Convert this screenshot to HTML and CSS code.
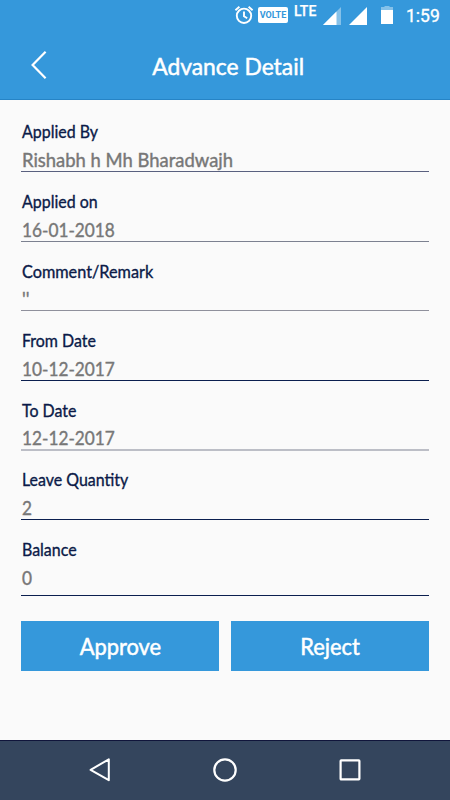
FILE: index.html
```html
<!DOCTYPE html>
<html lang="en">
<head>
<meta charset="utf-8">
<title>Advance Detail</title>
<link rel="stylesheet" href="styles.css">
</head>
<body>
<div class="screen">
  <header class="header">
    <div class="status">
      <svg class="alarm" width="20" height="20" viewBox="0 0 20 20" fill="none" stroke="#fff" stroke-width="1.9"><circle cx="10" cy="10.8" r="7.2"/><path d="M10 6.5v4.8l3.2 2M1.4 5.3l4-3.5M18.6 5.3l-4-3.5"/></svg>
      <span class="volte">VOLTE</span>
      <span class="lte">LTE</span>
      <svg class="signal" width="18" height="18" viewBox="0 0 18 18"><path fill="#fff" fill-opacity=".4" d="M18 0v18H0z"/><path fill="#fff" d="M13.5 4.5V18H0z"/></svg>
      <svg class="signal second" width="18" height="18" viewBox="0 0 18 18"><path fill="#fff" d="M18 0v18H0z"/></svg>
      <svg class="battery" width="12" height="18" viewBox="0 0 12 18"><path fill="#fff" fill-opacity=".4" d="M3.5 0h5v1H12v3H0V1h3.5z"/><path fill="#fff" d="M0 4h12v14H0z"/></svg>
      <span class="clock">1:59</span>
    </div>
    <div class="titlebar">
      <svg class="back" width="16" height="28" viewBox="0 0 16 28" fill="none" stroke="#fff" stroke-width="2.2"><path d="M14.6.8 1.6 14l13 13.2"/></svg>
      <h1 class="title"><span class="text">Advance Detail</span></h1>
    </div>
  </header>
  <main class="form">
    <div class="field tinted"><span class="label">Applied By</span><span class="value">Rishabh h Mh Bharadwajh</span></div>
    <div class="field soft"><span class="label">Applied on</span><span class="value number">16-01-2018</span></div>
    <div class="field pale"><span class="label remark">Comment/Remark</span><span class="value">''</span></div>
    <div class="field"><span class="label">From Date</span><span class="value number">10-12-2017</span></div>
    <div class="field faint"><span class="label">To Date</span><span class="value number">12-12-2017</span></div>
    <div class="field"><span class="label">Leave Quantity</span><span class="value number">2</span></div>
    <div class="field last"><span class="label">Balance</span><span class="value number">0</span></div>
    <div class="actions">
      <button class="button"><span class="text">Approve</span></button>
      <button class="button"><span class="text">Reject</span></button>
    </div>
  </main>
  <nav class="navbar">
    <svg width="24" height="26" viewBox="0 0 24 26" fill="none" stroke="#fff" stroke-width="2" stroke-linejoin="round"><path d="M20.8 2.3v20.9L2.6 12.8z"/></svg>
    <svg width="24" height="26" viewBox="0 0 24 26" fill="none" stroke="#fff" stroke-width="2.2"><circle cx="12" cy="13" r="10.7"/></svg>
    <svg width="24" height="26" viewBox="0 0 24 26" fill="none" stroke="#fff" stroke-width="2.2"><rect x="2.6" y="3.4" width="18.8" height="19" rx=".6"/></svg>
  </nav>
</div>
</body>
</html>
```

FILE: styles.css
```css
* { box-sizing: border-box; }
body { margin: 0; font-family: Lato, "Liberation Sans", sans-serif; }
.screen { width: 450px; height: 800px; display: flex; flex-direction: column; background: #fafafa; overflow: hidden; }
.header { height: 100px; background: #3598db; border-bottom: 1px solid #2684c6; color: #fff; }
.status { height: 34px; display: flex; align-items: flex-start; justify-content: flex-end; padding: 6px 10px 0 0; }
.alarm { margin: -1px 4px 0 0; }
.volte { width: 30px; height: 16px; margin: 1px 6px 0 0; border-radius: 2px; background: #fff; color: #3598db; font: 700 9px/17px Roboto, sans-serif; text-align: center; }
.lte { width: 23px; margin: -3px 6px 0 0; font: 500 14px/17px Roboto, sans-serif; -webkit-text-stroke: .25px currentColor; }
.signal { margin: 1px 8px 0 0; }
.second { margin-right: 14px; }
.battery { margin-right: 13px; }
.clock { width: 34px; font: 400 17.5px/20px Roboto, sans-serif; white-space: nowrap; -webkit-text-stroke: .35px currentColor; }
.titlebar { height: 65px; display: grid; grid-template-columns: 31px 1fr 31px; align-items: start; }
.back { grid-column: 2; grid-row: 1; margin-top: 17px; }
.title { grid-column: 1 / -1; grid-row: 1; margin: 17px 0 0 6px; font-size: 23.8px; line-height: 30px; font-weight: 400; text-align: center; }
.text { display: inline-block; white-space: nowrap; transform: scaleX(.96); -webkit-text-stroke: .5px currentColor; }
.form { flex: 1; padding: 22px 21px 0 21px; }
.field { height: 69.6px; padding-bottom: 19.2px; display: flex; flex-direction: column; align-items: flex-start; background: linear-gradient(#0b1f4f, #0b1f4f) 0 49px / 100% 1px no-repeat; }
.tinted { background-image: linear-gradient(#59607f, #59607f); }
.soft { background-image: linear-gradient(#7c8190, #7c8190); }
.pale { background-image: linear-gradient(#8f909c, #8f909c); }
.faint { background-image: linear-gradient(#bcbec6, #bcbec6); background-size: 100% 2px; }
.last { height: 81px; background-position: 0 55px; }
.label, .value { white-space: nowrap; transform-origin: left center; }
.label { margin: -.6px 0 0 .6px; height: 21px; font-size: 16.8px; line-height: 21px; color: #0b1a48; transform: scaleX(.95); -webkit-text-stroke: .35px currentColor; }
.remark { transform: scaleX(.968); }
.value { margin: 4.6px 0 0 .6px; height: 26px; font-size: 19px; line-height: 26px; color: #777; transform: scaleX(.97); -webkit-text-stroke: .4px currentColor; }
.number { transform: scaleX(.907); }
.actions { display: grid; grid-template-columns: 1fr 1fr; gap: 12px; }
.button { height: 50px; padding: 0; border: 0; background: #3598db; color: #fff; font: 400 22.8px/28px Lato, sans-serif; }
.navbar { height: 60px; padding: 0 88px 2px; display: flex; align-items: center; justify-content: space-between; background: #34455d; border-top: 1px solid #10153b; }
```
